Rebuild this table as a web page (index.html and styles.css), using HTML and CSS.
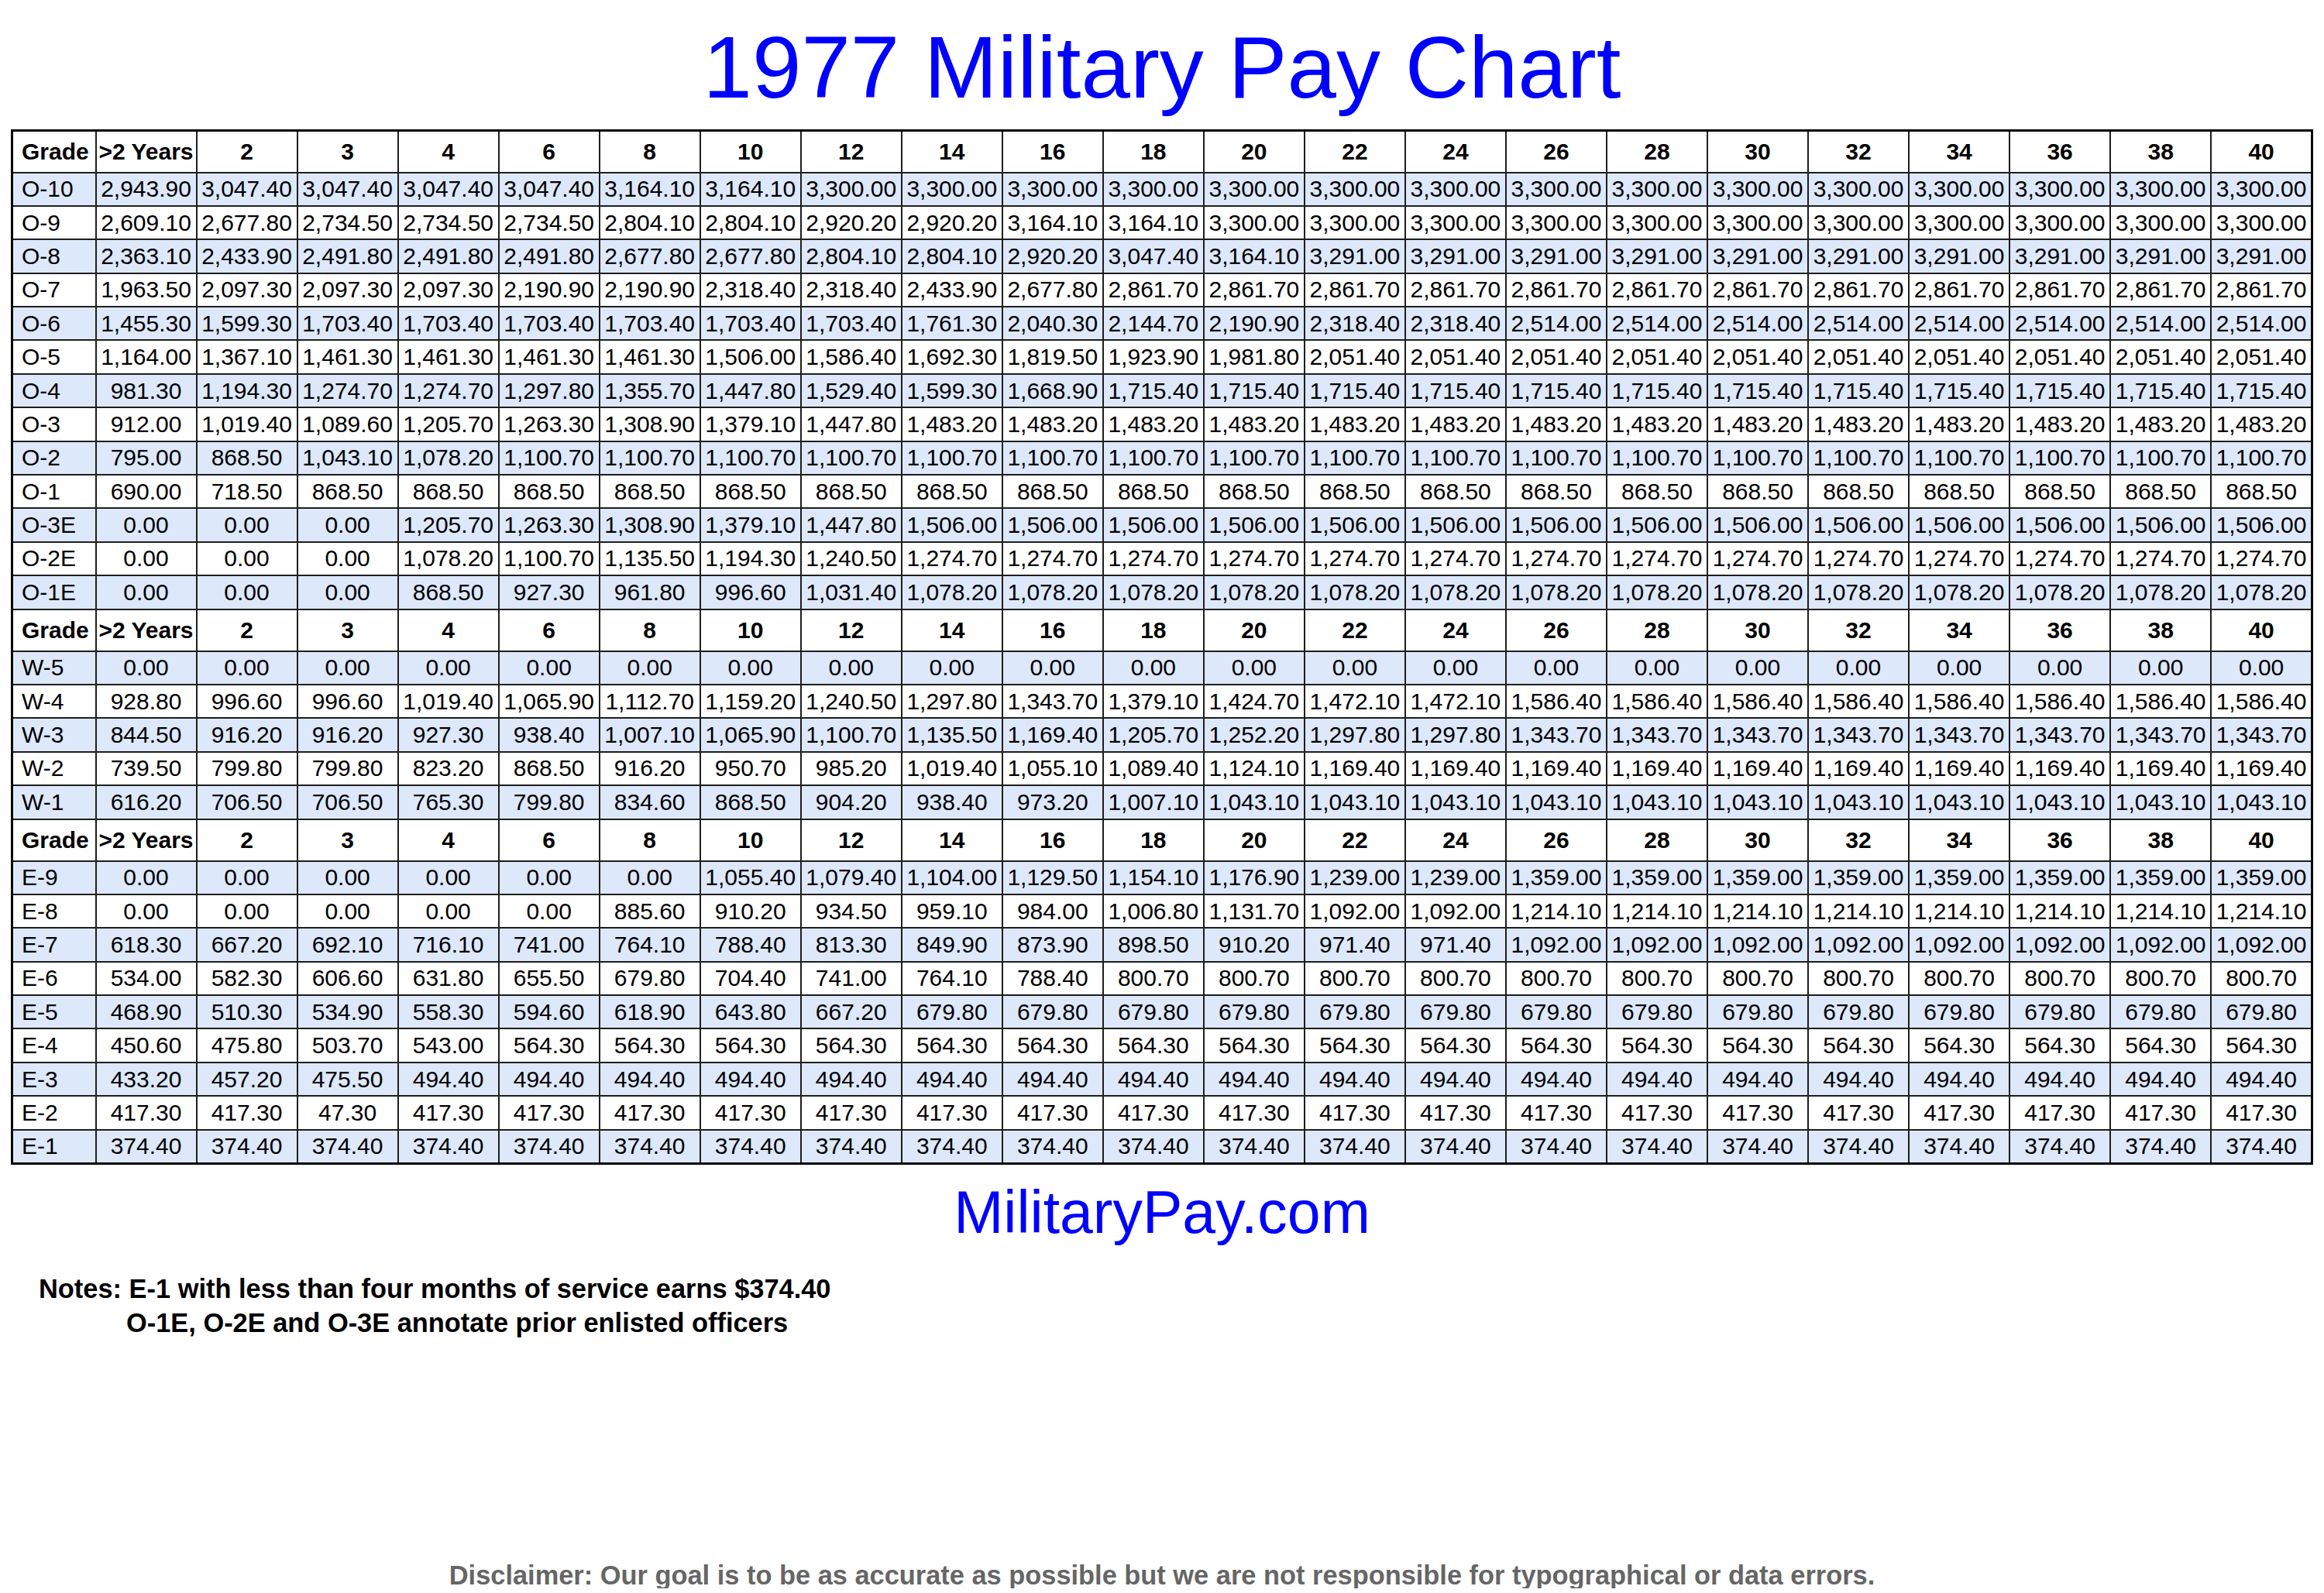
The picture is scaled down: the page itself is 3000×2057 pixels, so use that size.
FILE: index.html
```html
<!DOCTYPE html>
<html lang="en">
<head>
<meta charset="utf-8">
<title>1977 Military Pay Chart</title>
<link rel="stylesheet" href="styles.css">
</head>
<body>
<div class="page">
<h1 class="title">1977 Military Pay Chart</h1>
<table class="pay">
<colgroup><col class="gcol"><col span="22"></colgroup>
<tbody>
<tr class="hd"><th class="g">Grade</th><th>&gt;2 Years</th><th>2</th><th>3</th><th>4</th><th>6</th><th>8</th><th>10</th><th>12</th><th>14</th><th>16</th><th>18</th><th>20</th><th>22</th><th>24</th><th>26</th><th>28</th><th>30</th><th>32</th><th>34</th><th>36</th><th>38</th><th>40</th></tr>
<tr class="alt"><td class="g">O-10</td><td>2,943.90</td><td>3,047.40</td><td>3,047.40</td><td>3,047.40</td><td>3,047.40</td><td>3,164.10</td><td>3,164.10</td><td>3,300.00</td><td>3,300.00</td><td>3,300.00</td><td>3,300.00</td><td>3,300.00</td><td>3,300.00</td><td>3,300.00</td><td>3,300.00</td><td>3,300.00</td><td>3,300.00</td><td>3,300.00</td><td>3,300.00</td><td>3,300.00</td><td>3,300.00</td><td>3,300.00</td></tr>
<tr><td class="g">O-9</td><td>2,609.10</td><td>2,677.80</td><td>2,734.50</td><td>2,734.50</td><td>2,734.50</td><td>2,804.10</td><td>2,804.10</td><td>2,920.20</td><td>2,920.20</td><td>3,164.10</td><td>3,164.10</td><td>3,300.00</td><td>3,300.00</td><td>3,300.00</td><td>3,300.00</td><td>3,300.00</td><td>3,300.00</td><td>3,300.00</td><td>3,300.00</td><td>3,300.00</td><td>3,300.00</td><td>3,300.00</td></tr>
<tr class="alt"><td class="g">O-8</td><td>2,363.10</td><td>2,433.90</td><td>2,491.80</td><td>2,491.80</td><td>2,491.80</td><td>2,677.80</td><td>2,677.80</td><td>2,804.10</td><td>2,804.10</td><td>2,920.20</td><td>3,047.40</td><td>3,164.10</td><td>3,291.00</td><td>3,291.00</td><td>3,291.00</td><td>3,291.00</td><td>3,291.00</td><td>3,291.00</td><td>3,291.00</td><td>3,291.00</td><td>3,291.00</td><td>3,291.00</td></tr>
<tr><td class="g">O-7</td><td>1,963.50</td><td>2,097.30</td><td>2,097.30</td><td>2,097.30</td><td>2,190.90</td><td>2,190.90</td><td>2,318.40</td><td>2,318.40</td><td>2,433.90</td><td>2,677.80</td><td>2,861.70</td><td>2,861.70</td><td>2,861.70</td><td>2,861.70</td><td>2,861.70</td><td>2,861.70</td><td>2,861.70</td><td>2,861.70</td><td>2,861.70</td><td>2,861.70</td><td>2,861.70</td><td>2,861.70</td></tr>
<tr class="alt"><td class="g">O-6</td><td>1,455.30</td><td>1,599.30</td><td>1,703.40</td><td>1,703.40</td><td>1,703.40</td><td>1,703.40</td><td>1,703.40</td><td>1,703.40</td><td>1,761.30</td><td>2,040.30</td><td>2,144.70</td><td>2,190.90</td><td>2,318.40</td><td>2,318.40</td><td>2,514.00</td><td>2,514.00</td><td>2,514.00</td><td>2,514.00</td><td>2,514.00</td><td>2,514.00</td><td>2,514.00</td><td>2,514.00</td></tr>
<tr><td class="g">O-5</td><td>1,164.00</td><td>1,367.10</td><td>1,461.30</td><td>1,461.30</td><td>1,461.30</td><td>1,461.30</td><td>1,506.00</td><td>1,586.40</td><td>1,692.30</td><td>1,819.50</td><td>1,923.90</td><td>1,981.80</td><td>2,051.40</td><td>2,051.40</td><td>2,051.40</td><td>2,051.40</td><td>2,051.40</td><td>2,051.40</td><td>2,051.40</td><td>2,051.40</td><td>2,051.40</td><td>2,051.40</td></tr>
<tr class="alt"><td class="g">O-4</td><td>981.30</td><td>1,194.30</td><td>1,274.70</td><td>1,274.70</td><td>1,297.80</td><td>1,355.70</td><td>1,447.80</td><td>1,529.40</td><td>1,599.30</td><td>1,668.90</td><td>1,715.40</td><td>1,715.40</td><td>1,715.40</td><td>1,715.40</td><td>1,715.40</td><td>1,715.40</td><td>1,715.40</td><td>1,715.40</td><td>1,715.40</td><td>1,715.40</td><td>1,715.40</td><td>1,715.40</td></tr>
<tr><td class="g">O-3</td><td>912.00</td><td>1,019.40</td><td>1,089.60</td><td>1,205.70</td><td>1,263.30</td><td>1,308.90</td><td>1,379.10</td><td>1,447.80</td><td>1,483.20</td><td>1,483.20</td><td>1,483.20</td><td>1,483.20</td><td>1,483.20</td><td>1,483.20</td><td>1,483.20</td><td>1,483.20</td><td>1,483.20</td><td>1,483.20</td><td>1,483.20</td><td>1,483.20</td><td>1,483.20</td><td>1,483.20</td></tr>
<tr class="alt"><td class="g">O-2</td><td>795.00</td><td>868.50</td><td>1,043.10</td><td>1,078.20</td><td>1,100.70</td><td>1,100.70</td><td>1,100.70</td><td>1,100.70</td><td>1,100.70</td><td>1,100.70</td><td>1,100.70</td><td>1,100.70</td><td>1,100.70</td><td>1,100.70</td><td>1,100.70</td><td>1,100.70</td><td>1,100.70</td><td>1,100.70</td><td>1,100.70</td><td>1,100.70</td><td>1,100.70</td><td>1,100.70</td></tr>
<tr><td class="g">O-1</td><td>690.00</td><td>718.50</td><td>868.50</td><td>868.50</td><td>868.50</td><td>868.50</td><td>868.50</td><td>868.50</td><td>868.50</td><td>868.50</td><td>868.50</td><td>868.50</td><td>868.50</td><td>868.50</td><td>868.50</td><td>868.50</td><td>868.50</td><td>868.50</td><td>868.50</td><td>868.50</td><td>868.50</td><td>868.50</td></tr>
<tr class="alt"><td class="g">O-3E</td><td>0.00</td><td>0.00</td><td>0.00</td><td>1,205.70</td><td>1,263.30</td><td>1,308.90</td><td>1,379.10</td><td>1,447.80</td><td>1,506.00</td><td>1,506.00</td><td>1,506.00</td><td>1,506.00</td><td>1,506.00</td><td>1,506.00</td><td>1,506.00</td><td>1,506.00</td><td>1,506.00</td><td>1,506.00</td><td>1,506.00</td><td>1,506.00</td><td>1,506.00</td><td>1,506.00</td></tr>
<tr><td class="g">O-2E</td><td>0.00</td><td>0.00</td><td>0.00</td><td>1,078.20</td><td>1,100.70</td><td>1,135.50</td><td>1,194.30</td><td>1,240.50</td><td>1,274.70</td><td>1,274.70</td><td>1,274.70</td><td>1,274.70</td><td>1,274.70</td><td>1,274.70</td><td>1,274.70</td><td>1,274.70</td><td>1,274.70</td><td>1,274.70</td><td>1,274.70</td><td>1,274.70</td><td>1,274.70</td><td>1,274.70</td></tr>
<tr class="alt"><td class="g">O-1E</td><td>0.00</td><td>0.00</td><td>0.00</td><td>868.50</td><td>927.30</td><td>961.80</td><td>996.60</td><td>1,031.40</td><td>1,078.20</td><td>1,078.20</td><td>1,078.20</td><td>1,078.20</td><td>1,078.20</td><td>1,078.20</td><td>1,078.20</td><td>1,078.20</td><td>1,078.20</td><td>1,078.20</td><td>1,078.20</td><td>1,078.20</td><td>1,078.20</td><td>1,078.20</td></tr>
<tr class="hd"><th class="g">Grade</th><th>&gt;2 Years</th><th>2</th><th>3</th><th>4</th><th>6</th><th>8</th><th>10</th><th>12</th><th>14</th><th>16</th><th>18</th><th>20</th><th>22</th><th>24</th><th>26</th><th>28</th><th>30</th><th>32</th><th>34</th><th>36</th><th>38</th><th>40</th></tr>
<tr class="alt"><td class="g">W-5</td><td>0.00</td><td>0.00</td><td>0.00</td><td>0.00</td><td>0.00</td><td>0.00</td><td>0.00</td><td>0.00</td><td>0.00</td><td>0.00</td><td>0.00</td><td>0.00</td><td>0.00</td><td>0.00</td><td>0.00</td><td>0.00</td><td>0.00</td><td>0.00</td><td>0.00</td><td>0.00</td><td>0.00</td><td>0.00</td></tr>
<tr><td class="g">W-4</td><td>928.80</td><td>996.60</td><td>996.60</td><td>1,019.40</td><td>1,065.90</td><td>1,112.70</td><td>1,159.20</td><td>1,240.50</td><td>1,297.80</td><td>1,343.70</td><td>1,379.10</td><td>1,424.70</td><td>1,472.10</td><td>1,472.10</td><td>1,586.40</td><td>1,586.40</td><td>1,586.40</td><td>1,586.40</td><td>1,586.40</td><td>1,586.40</td><td>1,586.40</td><td>1,586.40</td></tr>
<tr class="alt"><td class="g">W-3</td><td>844.50</td><td>916.20</td><td>916.20</td><td>927.30</td><td>938.40</td><td>1,007.10</td><td>1,065.90</td><td>1,100.70</td><td>1,135.50</td><td>1,169.40</td><td>1,205.70</td><td>1,252.20</td><td>1,297.80</td><td>1,297.80</td><td>1,343.70</td><td>1,343.70</td><td>1,343.70</td><td>1,343.70</td><td>1,343.70</td><td>1,343.70</td><td>1,343.70</td><td>1,343.70</td></tr>
<tr><td class="g">W-2</td><td>739.50</td><td>799.80</td><td>799.80</td><td>823.20</td><td>868.50</td><td>916.20</td><td>950.70</td><td>985.20</td><td>1,019.40</td><td>1,055.10</td><td>1,089.40</td><td>1,124.10</td><td>1,169.40</td><td>1,169.40</td><td>1,169.40</td><td>1,169.40</td><td>1,169.40</td><td>1,169.40</td><td>1,169.40</td><td>1,169.40</td><td>1,169.40</td><td>1,169.40</td></tr>
<tr class="alt"><td class="g">W-1</td><td>616.20</td><td>706.50</td><td>706.50</td><td>765.30</td><td>799.80</td><td>834.60</td><td>868.50</td><td>904.20</td><td>938.40</td><td>973.20</td><td>1,007.10</td><td>1,043.10</td><td>1,043.10</td><td>1,043.10</td><td>1,043.10</td><td>1,043.10</td><td>1,043.10</td><td>1,043.10</td><td>1,043.10</td><td>1,043.10</td><td>1,043.10</td><td>1,043.10</td></tr>
<tr class="hd"><th class="g">Grade</th><th>&gt;2 Years</th><th>2</th><th>3</th><th>4</th><th>6</th><th>8</th><th>10</th><th>12</th><th>14</th><th>16</th><th>18</th><th>20</th><th>22</th><th>24</th><th>26</th><th>28</th><th>30</th><th>32</th><th>34</th><th>36</th><th>38</th><th>40</th></tr>
<tr class="alt"><td class="g">E-9</td><td>0.00</td><td>0.00</td><td>0.00</td><td>0.00</td><td>0.00</td><td>0.00</td><td>1,055.40</td><td>1,079.40</td><td>1,104.00</td><td>1,129.50</td><td>1,154.10</td><td>1,176.90</td><td>1,239.00</td><td>1,239.00</td><td>1,359.00</td><td>1,359.00</td><td>1,359.00</td><td>1,359.00</td><td>1,359.00</td><td>1,359.00</td><td>1,359.00</td><td>1,359.00</td></tr>
<tr><td class="g">E-8</td><td>0.00</td><td>0.00</td><td>0.00</td><td>0.00</td><td>0.00</td><td>885.60</td><td>910.20</td><td>934.50</td><td>959.10</td><td>984.00</td><td>1,006.80</td><td>1,131.70</td><td>1,092.00</td><td>1,092.00</td><td>1,214.10</td><td>1,214.10</td><td>1,214.10</td><td>1,214.10</td><td>1,214.10</td><td>1,214.10</td><td>1,214.10</td><td>1,214.10</td></tr>
<tr class="alt"><td class="g">E-7</td><td>618.30</td><td>667.20</td><td>692.10</td><td>716.10</td><td>741.00</td><td>764.10</td><td>788.40</td><td>813.30</td><td>849.90</td><td>873.90</td><td>898.50</td><td>910.20</td><td>971.40</td><td>971.40</td><td>1,092.00</td><td>1,092.00</td><td>1,092.00</td><td>1,092.00</td><td>1,092.00</td><td>1,092.00</td><td>1,092.00</td><td>1,092.00</td></tr>
<tr><td class="g">E-6</td><td>534.00</td><td>582.30</td><td>606.60</td><td>631.80</td><td>655.50</td><td>679.80</td><td>704.40</td><td>741.00</td><td>764.10</td><td>788.40</td><td>800.70</td><td>800.70</td><td>800.70</td><td>800.70</td><td>800.70</td><td>800.70</td><td>800.70</td><td>800.70</td><td>800.70</td><td>800.70</td><td>800.70</td><td>800.70</td></tr>
<tr class="alt"><td class="g">E-5</td><td>468.90</td><td>510.30</td><td>534.90</td><td>558.30</td><td>594.60</td><td>618.90</td><td>643.80</td><td>667.20</td><td>679.80</td><td>679.80</td><td>679.80</td><td>679.80</td><td>679.80</td><td>679.80</td><td>679.80</td><td>679.80</td><td>679.80</td><td>679.80</td><td>679.80</td><td>679.80</td><td>679.80</td><td>679.80</td></tr>
<tr><td class="g">E-4</td><td>450.60</td><td>475.80</td><td>503.70</td><td>543.00</td><td>564.30</td><td>564.30</td><td>564.30</td><td>564.30</td><td>564.30</td><td>564.30</td><td>564.30</td><td>564.30</td><td>564.30</td><td>564.30</td><td>564.30</td><td>564.30</td><td>564.30</td><td>564.30</td><td>564.30</td><td>564.30</td><td>564.30</td><td>564.30</td></tr>
<tr class="alt"><td class="g">E-3</td><td>433.20</td><td>457.20</td><td>475.50</td><td>494.40</td><td>494.40</td><td>494.40</td><td>494.40</td><td>494.40</td><td>494.40</td><td>494.40</td><td>494.40</td><td>494.40</td><td>494.40</td><td>494.40</td><td>494.40</td><td>494.40</td><td>494.40</td><td>494.40</td><td>494.40</td><td>494.40</td><td>494.40</td><td>494.40</td></tr>
<tr><td class="g">E-2</td><td>417.30</td><td>417.30</td><td>47.30</td><td>417.30</td><td>417.30</td><td>417.30</td><td>417.30</td><td>417.30</td><td>417.30</td><td>417.30</td><td>417.30</td><td>417.30</td><td>417.30</td><td>417.30</td><td>417.30</td><td>417.30</td><td>417.30</td><td>417.30</td><td>417.30</td><td>417.30</td><td>417.30</td><td>417.30</td></tr>
<tr class="alt"><td class="g">E-1</td><td>374.40</td><td>374.40</td><td>374.40</td><td>374.40</td><td>374.40</td><td>374.40</td><td>374.40</td><td>374.40</td><td>374.40</td><td>374.40</td><td>374.40</td><td>374.40</td><td>374.40</td><td>374.40</td><td>374.40</td><td>374.40</td><td>374.40</td><td>374.40</td><td>374.40</td><td>374.40</td><td>374.40</td><td>374.40</td></tr>
</tbody>
</table>
<p class="site">MilitaryPay.com</p>
<div class="notes">
<p class="note-line">Notes: E-1 with less than four months of service earns $374.40</p>
<p class="note-line note-indent">O-1E, O-2E and O-3E annotate prior enlisted officers</p>
</div>
<p class="disclaimer">Disclaimer: Our goal is to be as accurate as possible but we are not responsible for typographical or data errors.</p>
</div>
</body>
</html>
```

FILE: styles.css
```css
html, body {
  margin: 0;
  padding: 0;
  background: #ffffff;
}

body {
  font-family: "Liberation Sans", Arial, sans-serif;
  color: #000000;
}

.page {
  width: 3000px;
  display: flex;
  flex-direction: column;
}

.title {
  margin: 30px 0 0;
  text-align: center;
  font-size: 114px;
  line-height: 114px;
  font-weight: normal;
  color: #0000ff;
}

.pay {
  margin: 23px 0 0 14px;
  width: 2972px;
  border-collapse: collapse;
  table-layout: fixed;
  border: 3px solid #000000;
  font-size: 30px;
}

.gcol {
  width: 108px;
}

.pay th,
.pay td {
  border: 2px solid #1e1e1e;
  padding: 0;
  text-align: center;
  white-space: nowrap;
  overflow: hidden;
  line-height: 1;
}

.pay tr {
  height: 43.4px;
}

.pay tr.hd {
  height: 54px;
}

.pay th {
  font-weight: bold;
  background: #ffffff;
}

.pay .g {
  text-align: left;
  padding-left: 11px;
}

.pay tr.alt td {
  background: #dde8fb;
}

.site {
  margin: 23px 0 0;
  text-align: center;
  font-size: 77px;
  line-height: 77px;
  color: #0000ff;
}

.notes {
  margin: 38px 0 0 50px;
}

.note-line {
  margin: 0;
  font-size: 34.4px;
  line-height: 44px;
  font-weight: bold;
}

.note-indent {
  padding-left: 113px;
}

.disclaimer {
  margin: 287px 0 0;
  text-align: center;
  font-size: 34.4px;
  line-height: 34px;
  font-weight: bold;
  color: #666666;
}
```
